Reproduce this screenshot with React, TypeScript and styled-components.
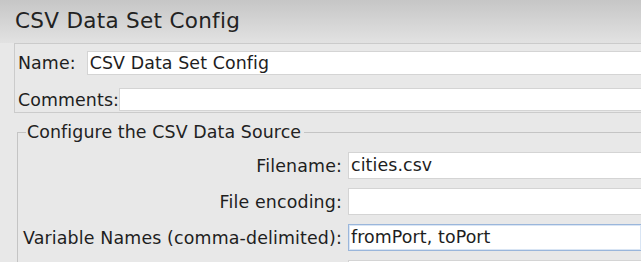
import React from "react";
import styled, { createGlobalStyle } from "styled-components";

const Global = createGlobalStyle`
  html, body { margin: 0; padding: 0; }
  body {
    background: #e8e8e8;
    font-family: "DejaVu Sans", "Liberation Sans", sans-serif;
    color: #1e1e1e;
    overflow: hidden;
  }
`;

const Page = styled.div`
  display: flex;
  flex-direction: column;
  width: 641px;
  height: 262px;
  overflow: hidden;
`;

const Header = styled.div`
  height: 43px;
  flex: none;
  box-sizing: border-box;
  padding: 7px 0 0 15px;
  background: linear-gradient(#c6c6c6, #e2e2e2);
  font-size: 21.5px;
  letter-spacing: 0.3px;
  line-height: 28px;
  color: #222;
`;

const NamePanel = styled.div`
  flex: none;
  margin-left: 14px;
  border: 1px solid #cbcbcb;
  border-right: none;
  display: flex;
  flex-direction: column;
  gap: 13px;
  padding: 7px 0 0 3px;
  box-sizing: border-box;
  height: 70px;
`;

const Row = styled.div<{ $gap: number }>`
  display: flex;
  align-items: center;
  gap: ${(p) => p.$gap}px;
`;

const Label = styled.span`
  font-size: 17.4px;
  letter-spacing: 0.1px;
  line-height: 20px;
  white-space: nowrap;
`;

const Field = styled.div<{ $h: number; $focus?: boolean }>`
  flex: 1;
  height: ${(p) => p.$h}px;
  box-sizing: border-box;
  background: #fff;
  border: 1px solid ${(p) => (p.$focus ? "#9ab6db" : "#d4d4d4")};
  border-right: none;
  ${(p) => (p.$focus ? "box-shadow: inset 0 0 0 1px #d9e5f4;" : "")}
  font-size: 17.4px;
  letter-spacing: 0.1px;
  line-height: ${(p) => p.$h - 2}px;
  padding-left: 2px;
  white-space: nowrap;
  overflow: hidden;
`;

const Fieldset = styled.fieldset`
  margin: 10px 0 0 17px;
  padding: 11px 0 0 5px;
  border: 1px solid #c4c4c4;
  border-right: none;
  border-bottom: none;
  min-width: 0;
`;

const Legend = styled.legend`
  font-size: 17.4px;
  letter-spacing: 0.1px;
  line-height: 18px;
  padding: 0 3px 0 1px;
  margin-left: 3px;
  color: #222;
`;

const Grid = styled.div`
  display: grid;
  grid-template-columns: 319px 1fr;
  column-gap: 6px;
  row-gap: 9px;
  align-items: center;
`;

const RightLabel = styled(Label)`
  text-align: right;
  letter-spacing: 0.15px;
`;

const GridField = styled(Field)`
  flex: none;
`;

const rows: { key: string; label: string; value: string; focus?: boolean }[] = [
  { key: "file", label: "Filename:", value: "cities.csv" },
  { key: "enc", label: "File encoding:", value: "" },
  { key: "vars", label: "Variable Names (comma-delimited):", value: "fromPort, toPort", focus: true },
  { key: "delim", label: "", value: "" },
];

export default function App() {
  return (
    <Page>
      <Global />
      <Header>CSV Data Set Config</Header>
      <NamePanel>
        <Row $gap={11}>
          <Label>Name:</Label>
          <Field $h={24}>CSV Data Set Config</Field>
        </Row>
        <Row $gap={0}>
          <Label>Comments:</Label>
          <Field $h={23}></Field>
        </Row>
      </NamePanel>
      <Fieldset>
        <Legend>Configure the CSV Data Source</Legend>
        <Grid>
          {rows.map((r) => (
            <React.Fragment key={r.key}>
              <RightLabel>{r.label}</RightLabel>
              <GridField $h={27} $focus={r.focus}>
                {r.value}
              </GridField>
            </React.Fragment>
          ))}
        </Grid>
      </Fieldset>
    </Page>
  );
}
